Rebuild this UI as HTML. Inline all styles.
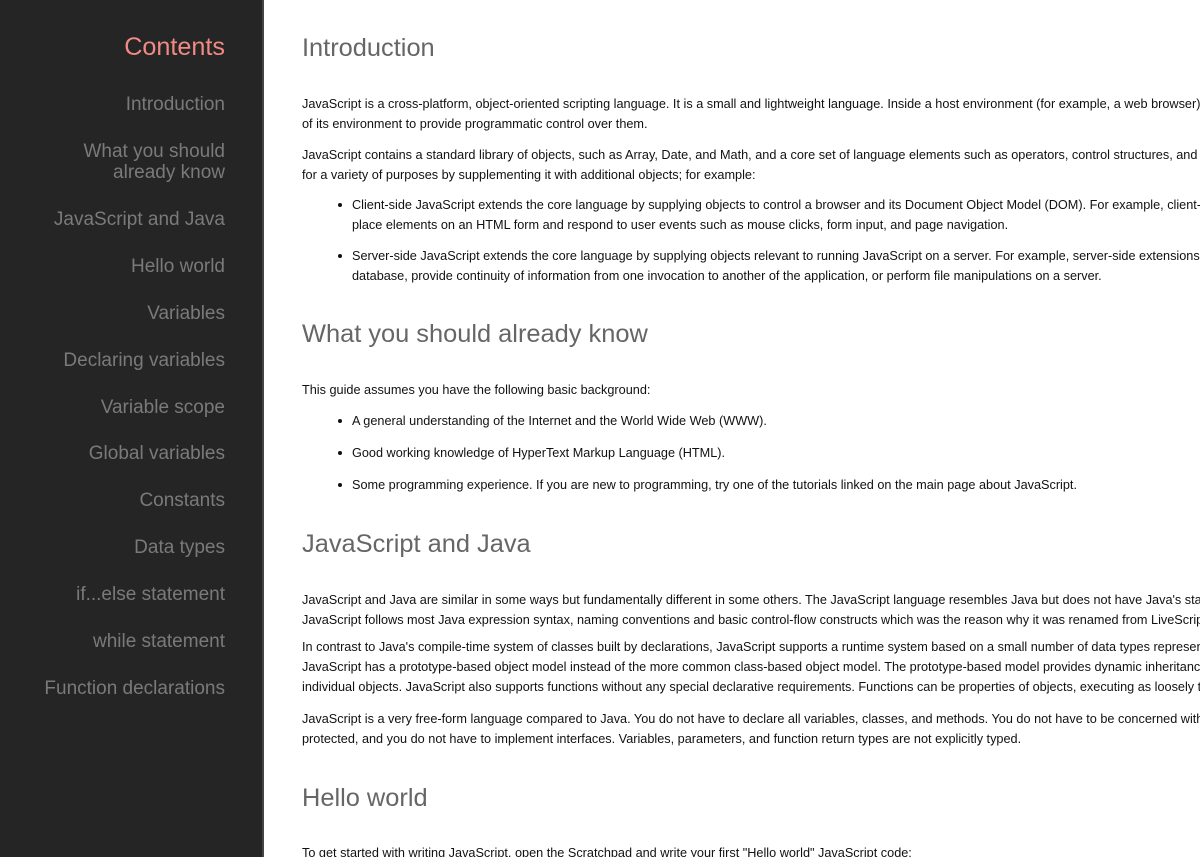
<!DOCTYPE html>
<html><head><meta charset="utf-8"><style>
*{margin:0;padding:0}
html,body{width:1200px;height:857px;overflow:hidden;background:#fff;font-family:"Liberation Sans",Arial,sans-serif}
#wrap{position:absolute;left:0;top:0;width:1200px;height:857px;overflow:hidden}
#side{position:absolute;left:0;top:0;width:262px;height:857px;background:#252525;border-right:2px solid #444}
.n{position:absolute;right:37px;text-align:right;font-size:19px;line-height:21px;color:#7a7a7a;white-space:nowrap}
.t{position:absolute;left:302px;white-space:nowrap;font-size:12.7px;line-height:20px;color:#111}
.h{position:absolute;left:302px;font-size:25.4px;line-height:30px;color:#666;white-space:nowrap}
.b{position:absolute;left:352px;white-space:nowrap;font-size:12.7px;line-height:20px;color:#111}
.b:before{content:"";position:absolute;left:-14px;top:8px;width:4px;height:4px;border-radius:50%;background:#111}
</style></head><body><div id="wrap">
<div id="side">
<div class="n" style="top:33px;font-size:25.2px;line-height:28px;color:#f08a84">Contents</div>
<div class="n" style="top:94px">Introduction</div>
<div class="n" style="top:141px">What you should<br>already know</div>
<div class="n" style="top:209px">JavaScript and Java</div>
<div class="n" style="top:256px">Hello world</div>
<div class="n" style="top:303px">Variables</div>
<div class="n" style="top:350px">Declaring variables</div>
<div class="n" style="top:397px">Variable scope</div>
<div class="n" style="top:443px">Global variables</div>
<div class="n" style="top:490px">Constants</div>
<div class="n" style="top:537px">Data types</div>
<div class="n" style="top:584px">if...else statement</div>
<div class="n" style="top:631px">while statement</div>
<div class="n" style="top:678px">Function declarations</div>
</div>
<div class="h" style="top:33px">Introduction</div>
<div class="t" style="top:94px">JavaScript is a cross-platform, object-oriented scripting language. It is a small and lightweight language. Inside a host environment (for example, a web browser), JavaScript can be<br>of its environment to provide programmatic control over them.</div>
<div class="t" style="top:145px">JavaScript contains a standard library of objects, such as Array, Date, and Math, and a core set of language elements such as operators, control structures, and statements.<br>for a variety of purposes by supplementing it with additional objects; for example:</div>
<div class="b" style="top:195px">Client-side JavaScript extends the core language by supplying objects to control a browser and its Document Object Model (DOM). For example, client-side<br>place elements on an HTML form and respond to user events such as mouse clicks, form input, and page navigation.</div>
<div class="b" style="top:246px">Server-side JavaScript extends the core language by supplying objects relevant to running JavaScript on a server. For example, server-side extensions<br>database, provide continuity of information from one invocation to another of the application, or perform file manipulations on a server.</div>
<div class="h" style="top:319px">What you should already know</div>
<div class="t" style="top:380px">This guide assumes you have the following basic background:</div>
<div class="b" style="top:411px">A general understanding of the Internet and the World Wide Web (WWW).</div>
<div class="b" style="top:443px">Good working knowledge of HyperText Markup Language (HTML).</div>
<div class="b" style="top:475px">Some programming experience. If you are new to programming, try one of the tutorials linked on the main page about JavaScript.</div>
<div class="h" style="top:529px">JavaScript and Java</div>
<div class="t" style="top:590px">JavaScript and Java are similar in some ways but fundamentally different in some others. The JavaScript language resembles Java but does not have Java's static<br>JavaScript follows most Java expression syntax, naming conventions and basic control-flow constructs which was the reason why it was renamed from LiveScript.</div>
<div class="t" style="top:637px">In contrast to Java's compile-time system of classes built by declarations, JavaScript supports a runtime system based on a small number of data types representing<br>JavaScript has a prototype-based object model instead of the more common class-based object model. The prototype-based model provides dynamic inheritance;<br>individual objects. JavaScript also supports functions without any special declarative requirements. Functions can be properties of objects, executing as loosely typed</div>
<div class="t" style="top:709px">JavaScript is a very free-form language compared to Java. You do not have to declare all variables, classes, and methods. You do not have to be concerned with<br>protected, and you do not have to implement interfaces. Variables, parameters, and function return types are not explicitly typed.</div>
<div class="h" style="top:783px">Hello world</div>
<div class="t" style="top:843px">To get started with writing JavaScript, open the Scratchpad and write your first "Hello world" JavaScript code:</div>
</div></body></html>
